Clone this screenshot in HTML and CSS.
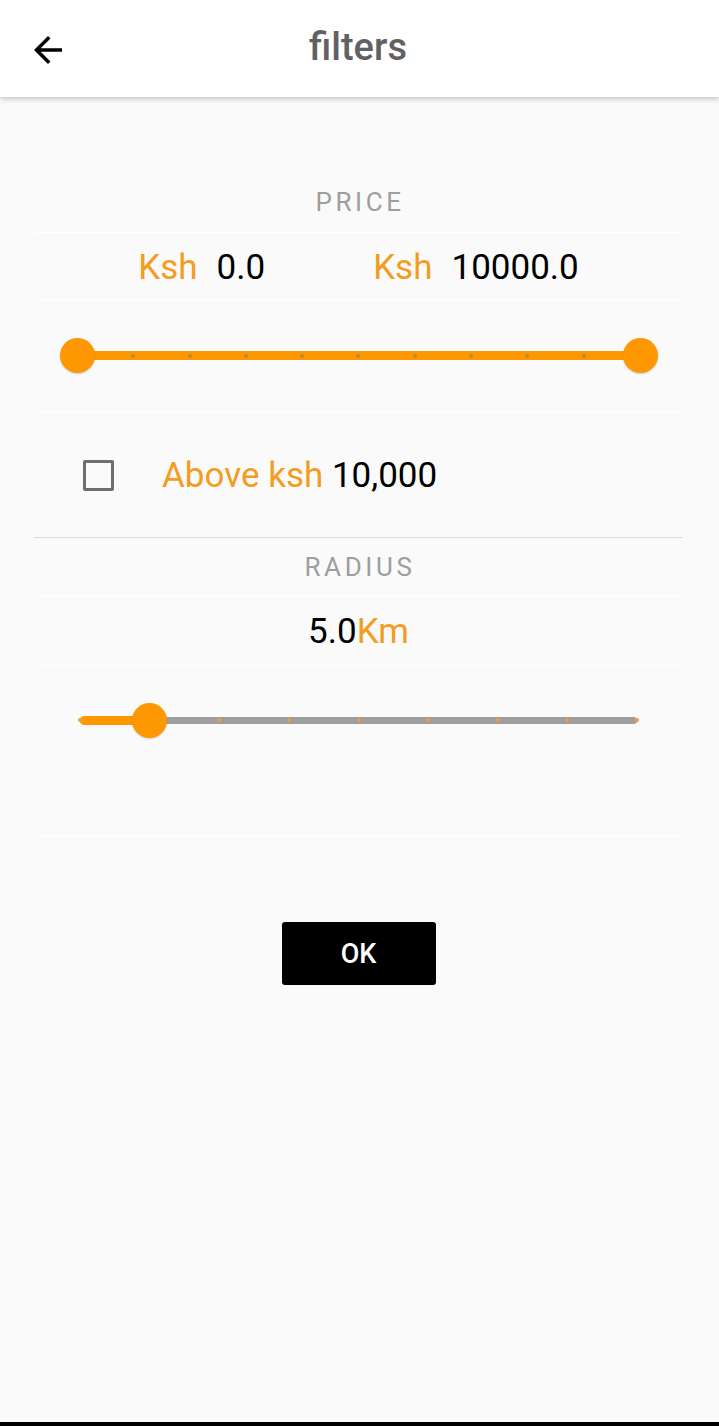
FILE: index.html
```html
<!DOCTYPE html>
<html>
<head>
<meta charset="utf-8">
<link rel="stylesheet" href="styles.css">
</head>
<body>
<div class="page">
  <header class="appbar">
    <svg class="back" viewBox="0 0 24 24" width="42" height="42"><path d="M20 11H7.83l5.59-5.59L12 4l-8 8 8 8 1.41-1.41L7.83 13H20v-2z" fill="#000"/></svg>
    <h1 class="title">filters</h1>
  </header>
  <main class="content">
    <div class="row row-price-label"><span class="label">PRICE</span></div>
    <div class="row row-values">
      <div class="group"><span class="orange">Ksh</span><span class="val">0.0</span></div>
      <div class="group"><span class="orange">Ksh</span><span class="val">10000.0</span></div>
    </div>
    <div class="row row-slider1">
      <div class="slider range">
        <div class="track full"></div>
        <div class="ticks gray-ticks">
          <i></i><i></i><i></i><i></i><i></i><i></i><i></i><i></i><i></i><i></i><i></i>
        </div>
        <div class="thumb" style="left:0%"></div>
        <div class="thumb" style="left:100%"></div>
      </div>
    </div>
    <div class="row row-check">
      <span class="checkbox"></span>
      <span class="check-text"><span class="orange">Above ksh</span> 10,000</span>
    </div>
    <div class="row row-radius-label"><span class="label">RADIUS</span></div>
    <div class="row row-km"><span>5.0</span><span class="orange">Km</span></div>
    <div class="row row-slider2">
      <div class="slider single">
        <div class="track inactive"></div>
        <div class="track active" style="width:12.5%"></div>
        <div class="ticks orange-ticks">
          <i></i><i></i><i></i><i></i><i></i><i></i><i></i><i></i><i></i>
        </div>
        <div class="thumb" style="left:12.5%"></div>
      </div>
    </div>
    <div class="actions">
      <button class="ok">OK</button>
    </div>
  </main>
  <div class="navbar"></div>
</div>
</body>
</html>
```

FILE: styles.css
```css
* { box-sizing: border-box; }
html, body { margin: 0; padding: 0; }
body {
  background: #fafafa;
  font-family: Roboto, "Noto Sans", sans-serif;
}
.page {
  min-height: 1426px;
  display: flex;
  flex-direction: column;
}
.appbar {
  height: 97px;
  background: #fff;
  box-shadow: 0 2px 5px rgba(0,0,0,0.22);
  display: flex;
  align-items: center;
  position: relative;
  z-index: 1;
}
.back {
  margin-left: 27px;
  margin-top: 2px;
}
.title {
  margin: 0;
  position: absolute;
  left: 0;
  right: 0;
  top: 0;
  text-align: center;
  font-size: 38px;
  font-weight: 500;
  color: #616161;
  line-height: 94px;
  pointer-events: none;
  padding-right: 3px;
}
.content {
  padding: 0 36px 0 34px;
  flex: 1;
}
.row {
  border-bottom: 1px solid #ffffff;
  display: flex;
  align-items: center;
  justify-content: center;
}
.label {
  font-size: 26px;
  letter-spacing: 3.6px;
  color: #9e9e9e;
  line-height: 30px;
  margin-right: -3px;
}
.row-price-label {
  height: 136px;
  padding-top: 74px;
}
.orange { color: #f39c22; }
.row-values {
  height: 67px;
  font-size: 35px;
  color: #000;
  gap: 108px;
  padding-top: 3px;
}
.group { display: flex; gap: 19px; }
.row-slider1 {
  height: 112px;
  padding: 0 43px 0 43px;
}
.slider {
  position: relative;
  width: 100%;
  height: 36px;
}
.track {
  position: absolute;
  left: 0;
  top: 50%;
}
.range .track.full {
  width: 100%;
  height: 9px;
  margin-top: -5px;
  background: #ff9800;
}
.ticks {
  position: absolute;
  left: 0;
  right: 0;
  top: 50%;
  display: flex;
  justify-content: space-between;
  height: 4px;
  margin-top: -2px;
}
.ticks i {
  width: 4px;
  height: 4px;
  border-radius: 50%;
  margin-left: -2px;
  margin-right: -2px;
}
.gray-ticks i { background: rgba(120,120,120,0.5); }
.gray-ticks i:first-child, .gray-ticks i:last-child { visibility: hidden; }
.orange-ticks i { background: #e8a040; }
.thumb {
  position: absolute;
  top: 50%;
  width: 35px;
  height: 35px;
  margin-left: -17.5px;
  margin-top: -17.5px;
  border-radius: 50%;
  background: #ff9800;
  box-shadow: 0 1px 2px rgba(0,0,0,0.18);
}
.row-check {
  height: 126px;
  justify-content: flex-start;
  border-bottom: 1px solid #dcdcdc;
  padding-left: 49px;
  padding-top: 2px;
}
.checkbox {
  width: 31px;
  height: 31px;
  border: 3px solid #6f6f6f;
  border-radius: 2px;
  display: inline-block;
}
.check-text {
  margin-left: 48px;
  font-size: 35px;
  color: #000;
}
.row-radius-label {
  height: 59px;
}
.row-km {
  height: 69px;
  font-size: 35px;
  color: #000;
  padding-top: 1px;
}
.row-slider2 {
  height: 171px;
  align-items: flex-start;
  padding: 36px 46px 0 46px;
}
.single .track.inactive {
  width: 100%;
  height: 7px;
  margin-top: -3px;
  border-radius: 3.5px;
  background: #9e9e9e;
}
.single .track.active {
  height: 9px;
  margin-top: -4px;
  border-radius: 4.5px 0 0 4.5px;
  background: #ff9800;
}
.actions {
  display: flex;
  justify-content: center;
  padding-top: 85px;
}
.ok {
  width: 154px;
  height: 63px;
  background: #000;
  color: #fff;
  border: none;
  border-radius: 3px;
  font-family: Roboto, sans-serif;
  font-size: 27px;
  font-weight: 500;
}
.navbar {
  height: 4px;
  background: #000;
}
```
